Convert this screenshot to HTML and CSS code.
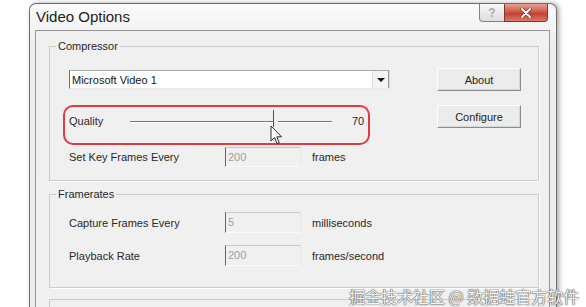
FILE: index.html
```html
<!DOCTYPE HTML>
<html lang="en">
<head>
    <meta http-equiv="content-type" content="text/html; charset=utf-8">
    <title>Video Options</title>
    <link rel="stylesheet" href="styles.css">
</head>
<body>
    <div class="window">
        <div class="titlebar">
            <span class="titlebar__text">Video Options</span>
            <div class="caption">
                <span class="caption__help">?</span>
                <span class="caption__close">
                    <svg width="12" height="10" viewBox="0 0 12 10">
                        <path d="M2 1 L10 9 M10 1 L2 9" stroke="#7a3028" stroke-width="3.4" stroke-linecap="round"/>
                        <path d="M2 1 L10 9 M10 1 L2 9" stroke="#ffffff" stroke-width="2" stroke-linecap="round"/>
                    </svg>
                </span>
            </div>
        </div>
        <div class="client">
            <fieldset class="group group--compressor">
                <legend>Compressor</legend>
                <div class="group__body">
                    <div class="group__main">
                        <div class="combo">
                            <span class="combo__text">Microsoft Video 1</span>
                            <span class="combo__arrow"></span>
                        </div>
                        <div class="quality">
                            <span class="quality__label">Quality</span>
                            <div class="slider">
                                <div class="slider__thumb"></div>
                            </div>
                            <span class="quality__value">70</span>
                        </div>
                        <div class="row">
                            <span class="row__label">Set Key Frames Every</span>
                            <span class="field">200</span>
                            <span class="row__unit">frames</span>
                        </div>
                    </div>
                    <div class="group__side">
                        <button class="button button--about">About</button>
                        <button class="button button--configure">Configure</button>
                    </div>
                </div>
            </fieldset>
            <fieldset class="group group--framerates">
                <legend>Framerates</legend>
                <div class="group__rows">
                    <div class="row">
                        <span class="row__label">Capture Frames Every</span>
                        <span class="field">5</span>
                        <span class="row__unit">milliseconds</span>
                    </div>
                    <div class="row">
                        <span class="row__label">Playback Rate</span>
                        <span class="field">200</span>
                        <span class="row__unit">frames/second</span>
                    </div>
                </div>
            </fieldset>
            <div class="group group--next"></div>
        </div>
    </div>

    <!-- mouse pointer sitting on the slider thumb -->
    <svg class="pointer" width="13" height="20" viewBox="0 0 13 20">
        <path d="M1 1 L1 16 L4.5 12.5 L7 18.5 L9.2 17.6 L6.8 11.8 L11.5 11.8 Z" fill="#ffffff" stroke="#2a2a2a" stroke-width="1" stroke-linejoin="round"/>
    </svg>

    <div class="watermark">掘金技术社区 @ 数据蛙官方软件</div>
</body>
</html>
```

FILE: styles.css
```css
:root {
    --dialog-face: rgb(240, 240, 240);
    --label-text: rgb(40, 40, 40);
    --disabled-text: rgb(160, 160, 160);
    --etched-line: rgb(204, 204, 204);
    --annotation-red: rgb(222, 60, 66);
}

html, body {
    margin: 0;
    padding: 0;
}

body {
    position: relative;
    width: 586px;
    height: 307px;
    overflow: hidden;
    background-color: #fff;
    font-family: "Liberation Sans", Arial, sans-serif;
    font-size: 11px;
    color: var(--label-text);
}

/* Window frame */
.window {
    box-sizing: border-box;
    width: 528px;
    height: 340px;
    margin: 3px 0 0 29px;
    padding: 0 6px 0 5px;
    border: 1px solid rgb(110, 110, 110);
    border-bottom: none;
    border-radius: 7px 7px 0 0;
    background: linear-gradient(rgb(250, 250, 250), rgb(238, 238, 238) 40px, rgb(236, 236, 236));
    box-shadow: 2px 0 5px rgba(0, 0, 0, 0.35);
}

.titlebar {
    display: flex;
    align-items: flex-start;
    height: 26px;
}

.titlebar__text {
    flex: 1;
    margin: 3px 0 0 1px;
    font-size: 15px;
    line-height: 20px;
    color: rgb(30, 30, 30);
}

.caption {
    display: flex;
    margin-right: 2px;
}

.caption__help,
.caption__close {
    box-sizing: border-box;
    display: flex;
    align-items: center;
    justify-content: center;
    height: 18px;
    border: 1px solid rgb(130, 130, 130);
    border-top: none;
}

.caption__help {
    width: 25px;
    border-right: none;
    border-radius: 0 0 0 4px;
    background: linear-gradient(rgb(248, 248, 248), rgb(222, 222, 222));
    font-weight: bold;
    font-size: 12px;
    color: rgb(170, 170, 170);
}

.caption__close {
    width: 44px;
    border-color: rgb(130, 55, 48);
    border-radius: 0 0 4px 0;
    background: linear-gradient(rgb(232, 160, 148), rgb(205, 82, 66) 50%, rgb(196, 64, 50) 55%, rgb(220, 120, 100));
}

.client {
    box-sizing: border-box;
    height: 320px;
    border: 1px solid rgb(150, 150, 150);
    background-color: var(--dialog-face);
    padding: 8px 10px 0 13px;
}

/* Group boxes */
.group {
    margin: 0;
    padding: 0;
    border: 1px solid var(--etched-line);
    box-shadow: 1px 1px 0 #fff;
    min-width: 0;
}

.group legend {
    margin-left: 6px;
    padding: 0 2px;
    line-height: 14px;
}

.group__body {
    display: flex;
    padding: 0 17px 13px 0;
}

.group__main {
    flex: 1;
    padding-top: 17px;
}

.group__side {
    display: flex;
    flex-direction: column;
    gap: 14px;
    width: 84px;
    padding-top: 15px;
}

.group--framerates {
    margin-top: 6px;
}

.group__rows {
    display: flex;
    flex-direction: column;
    gap: 12px;
    padding: 11px 0 21px;
}

.group--next {
    margin-top: 11px;
    height: 40px;
}

/* Combo box */
.combo {
    box-sizing: border-box;
    display: flex;
    align-items: center;
    width: 321px;
    height: 19px;
    margin-left: 19px;
    background-color: #fff;
    border: 1px solid;
    border-color: rgb(170, 170, 170) rgb(220, 220, 220) rgb(235, 235, 235) rgb(110, 110, 110);
}

.combo__text {
    flex: 1;
    padding-left: 2px;
    color: rgb(20, 20, 20);
}

.combo__arrow {
    box-sizing: border-box;
    display: flex;
    align-items: center;
    justify-content: center;
    width: 17px;
    height: 17px;
    background-color: rgb(244, 244, 244);
    border-left: 1px solid rgb(220, 220, 220);
    border-right: 1px solid rgb(150, 150, 150);
}

.combo__arrow::after {
    content: "";
    border-left: 4px solid transparent;
    border-right: 4px solid transparent;
    border-top: 4px solid rgb(20, 20, 20);
}

/* Quality slider, circled in red */
.quality {
    box-sizing: border-box;
    display: flex;
    align-items: flex-start;
    width: 307px;
    height: 40px;
    margin: 16px 0 0 13px;
    padding: 7px 0 0 4px;
    border: 2px solid var(--annotation-red);
    border-radius: 10px;
}

.quality__label {
    width: 61px;
    line-height: 14px;
}

.slider {
    position: relative;
    width: 202px;
    height: 14px;
}

.slider::before {
    content: "";
    display: block;
    margin-top: 7px;
    height: 1px;
    background-color: rgb(120, 120, 120);
    border-bottom: 1px solid #fff;
}

.slider__thumb {
    position: absolute;
    left: 143px;
    top: -4px;
    width: 4px;
    height: 17px;
    background-color: var(--dialog-face);
    border-left: 1px solid rgb(80, 80, 80);
}

.quality__value {
    margin-left: 20px;
    line-height: 14px;
}

/* Label / field / unit rows */
.row {
    display: flex;
    align-items: center;
    height: 21px;
}

.group__main .row {
    height: 20px;
    margin: 2px 0 0 19px;
}

.group__rows .row {
    margin-left: 19px;
}

.row__label {
    width: 156px;
}

.field {
    box-sizing: border-box;
    width: 76px;
    height: 100%;
    padding: 3px 0 0 2px;
    color: var(--disabled-text);
    border: 1px solid;
    border-color: rgb(200, 200, 200) rgb(230, 230, 230) rgb(250, 250, 250) rgb(100, 100, 100);
}

.row__unit {
    margin-left: 11px;
}

/* Push buttons */
.button {
    box-sizing: border-box;
    height: 23px;
    padding: 0;
    font-family: inherit;
    font-size: 11px;
    color: rgb(30, 30, 30);
    background-color: rgb(236, 236, 236);
    border: 1px solid;
    border-color: #fff rgb(140, 140, 140) rgb(140, 140, 140) #fff;
    box-shadow: inset -1px -1px 0 rgb(215, 215, 215);
}

/* Overlays */
.pointer {
    position: absolute;
    left: 270px;
    top: 125px;
}

.watermark {
    position: absolute;
    left: 349px;
    top: 285px;
    font-family: "Noto Sans CJK SC", sans-serif;
    font-size: 16px;
    line-height: 22px;
    white-space: nowrap;
    color: rgb(244, 244, 244);
    text-shadow: 0 0 1px rgb(90, 90, 90), 0 0 1px rgb(90, 90, 90), 0 0 1px rgb(90, 90, 90);
}
```
